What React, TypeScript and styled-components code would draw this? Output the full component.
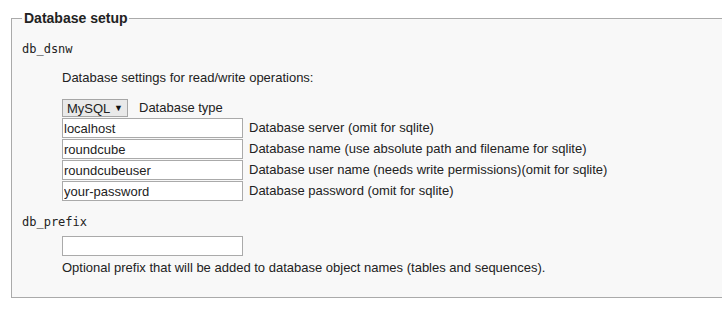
import React from "react";
import styled, { createGlobalStyle } from "styled-components";

const GlobalStyle = createGlobalStyle`
  html, body {
    margin: 0;
    padding: 0;
    background: #ffffff;
    overflow: hidden;
  }
  body {
    font-family: "Liberation Sans", Arial, sans-serif;
    font-size: 13px;
    color: #222;
  }
`;

const Page = styled.div`
  width: 722px;
  height: 313px;
  overflow: hidden;
`;

const FieldBox = styled.fieldset`
  margin: 10px 0 0 11px;
  padding: 0 10px 21px 10px;
  width: 760px;
  box-sizing: border-box;
  min-width: 0;
  border: 1px solid #aaaaaa;
  background: #f8f8f8;
`;

const Legend = styled.legend`
  padding: 0 2px;
  font-size: 14px;
  font-weight: bold;
  line-height: 16px;
  color: #222;
`;

const List = styled.dl`
  margin: 15px 0 0;
  padding: 0;
`;

const Term = styled.dt<{ $gap?: number }>`
  margin-top: ${(p) => p.$gap ?? 0}px;
  font-family: "DejaVu Sans Mono", monospace;
  font-size: 12px;
  line-height: 16px;
  color: #222;
`;

const Detail = styled.dd`
  margin: 0 0 0 40px;
  display: flex;
  flex-direction: column;
`;

const Hint = styled.div<{ $gap?: number }>`
  margin-top: ${(p) => p.$gap ?? 0}px;
  line-height: 16px;
`;

const Rows = styled.div`
  margin-top: 13px;
  display: flex;
  flex-direction: column;
  gap: 1px;
`;

const Row = styled.div<{ $gap: number }>`
  display: flex;
  align-items: center;
  gap: ${(p) => p.$gap}px;
  line-height: 16px;
`;

const SelectWrap = styled.div`
  position: relative;
  width: 66px;
  height: 18px;
`;

const Select = styled.select`
  appearance: none;
  width: 100%;
  height: 100%;
  margin: 0;
  padding: 0 0 0 4px;
  box-sizing: border-box;
  border: 1px solid #a6a6a6;
  border-radius: 0;
  background: #e9e9e9;
  font-family: "Liberation Sans", Arial, sans-serif;
  font-size: 13px;
  color: #222;
`;

const Arrow = styled.span`
  position: absolute;
  right: 5px;
  top: 3px;
  font-size: 9px;
  line-height: 12px;
  color: #111;
  pointer-events: none;
`;

const TextInput = styled.input`
  width: 181px;
  height: 20px;
  margin: 0;
  padding: 0 1px;
  box-sizing: border-box;
  border: 1px solid #aaaaaa;
  border-radius: 0;
  background: #ffffff;
  font-family: "Liberation Sans", Arial, sans-serif;
  font-size: 13px;
  color: #222;
  outline: none;
`;

const PrefixInput = styled(TextInput)`
  margin-top: 6px;
`;

const fields = [
  { value: "localhost", label: "Database server (omit for sqlite)" },
  { value: "roundcube", label: "Database name (use absolute path and filename for sqlite)" },
  { value: "roundcubeuser", label: "Database user name (needs write permissions)(omit for sqlite)" },
  { value: "your-password", label: "Database password (omit for sqlite)" },
];

export default function App() {
  return (
    <Page>
      <GlobalStyle />
      <FieldBox>
        <Legend>Database setup</Legend>
        <List>
          <Term>db_dsnw</Term>
          <Detail>
            <Hint $gap={13}>Database settings for read/write operations:</Hint>
            <Rows>
              <Row $gap={11}>
                <SelectWrap>
                  <Select defaultValue="mysql">
                    <option value="mysql">MySQL</option>
                    <option value="pgsql">PostgreSQL</option>
                    <option value="sqlite">SQLite</option>
                  </Select>
                  <Arrow>▼</Arrow>
                </SelectWrap>
                <span>Database type</span>
              </Row>
              {fields.map((f) => (
                <Row $gap={6} key={f.value}>
                  <TextInput type="text" defaultValue={f.value} />
                  <span>{f.label}</span>
                </Row>
              ))}
            </Rows>
          </Detail>
          <Term $gap={13}>db_prefix</Term>
          <Detail>
            <PrefixInput type="text" defaultValue="" />
            <Hint $gap={4}>
              Optional prefix that will be added to database object names (tables and sequences).
            </Hint>
          </Detail>
        </List>
      </FieldBox>
    </Page>
  );
}
